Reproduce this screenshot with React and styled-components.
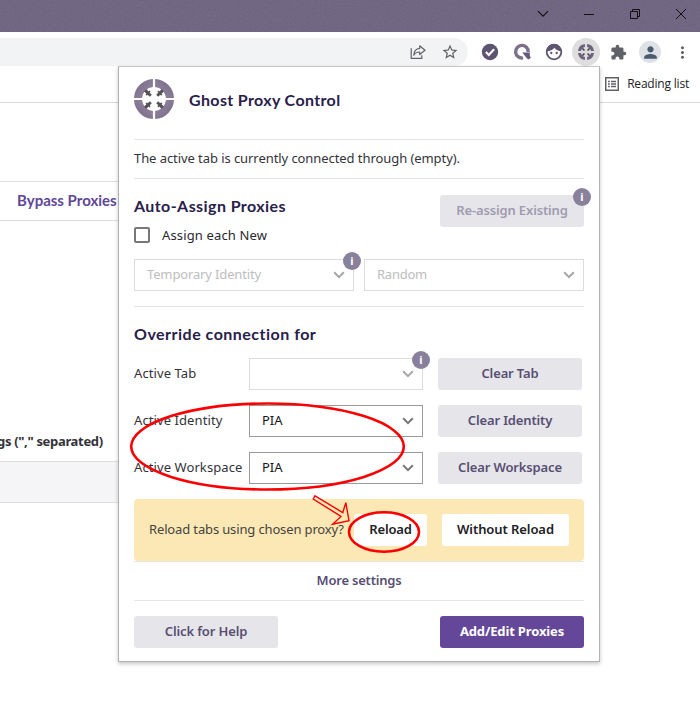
import React from 'react';
import styled, { createGlobalStyle, css } from 'styled-components';
import { MdStarBorder, MdExtension, MdPerson, MdMoreVert } from 'react-icons/md';

const GlobalStyle = createGlobalStyle`
  * { box-sizing: border-box; }
  body {
    margin: 0;
    background: #fff;
    overflow: hidden;
    font-family: 'Noto Sans', 'Open Sans', sans-serif;
    font-size: 13px;
    color: #333339;
  }
`;

const Window = styled.div`
  position: relative;
  width: 700px;
  height: 708px;
  overflow: hidden;
  background: #fff;
`;

/* ---------- browser chrome ---------- */
const TitleBar = styled.header`
  position: relative;
  height: 32px;
  background: #6c617f;
  display: flex;
  justify-content: flex-end;
  padding: 0 0 4px;
  margin-right: -4px;
`;
const Grain = styled.svg`
  position: absolute;
  inset: 0;
  width: 100%;
  height: 100%;
  opacity: 0.13;
`;
const WindowButton = styled.div`
  position: relative;
  width: 46px;
  display: flex;
  align-items: center;
  justify-content: center;
`;
const Toolbar = styled.div`
  height: 38px;
  padding-top: 6px;
  display: flex;
  align-items: flex-start;
`;
const Omnibox = styled.div`
  width: 468px;
  height: 28px;
  margin-right: 6px;
  padding-right: 2px;
  background: #f1f3f4;
  border-radius: 0 14px 14px 0;
  display: flex;
  justify-content: flex-end;
`;
const ToolIcon = styled.div`
  width: 32px;
  height: 28px;
  display: flex;
  align-items: center;
  justify-content: center;
  color: #5f6368;
`;
const Disc = styled.div`
  width: ${(p) => p.$size}px;
  height: ${(p) => p.$size}px;
  border-radius: 50%;
  background: ${(p) => p.$color};
  color: #4c5a70;
  display: flex;
  flex: none;
  align-items: center;
  justify-content: center;
`;
const BookmarksBar = styled.div`
  height: 33px;
  border-bottom: 1px solid #d9d9dc;
  display: flex;
  justify-content: flex-end;
  align-items: center;
  gap: 8px;
  padding: 0 11px 5px 0;
  color: #202124;
  font: 12px/16px 'Open Sans', 'Noto Sans', sans-serif;
  letter-spacing: -0.2px;
`;

/* ---------- page behind the popup ---------- */
const Page = styled.main`
  width: 400px;
  padding-top: 78px;
`;
const TabStrip = styled.div`
  height: 40px;
  border: solid #dedee1;
  border-width: 1px 0;
  padding-left: 17px;
  font: 700 15px/37px Lato, sans-serif;
  color: #5f4797;
`;
const FieldLabel = styled.div`
  margin: 210px 0 0 -3px;
  font-weight: 700;
  line-height: 20px;
  letter-spacing: -0.33px;
  white-space: nowrap;
`;
const FieldBox = styled.div`
  margin-top: 10px;
  height: 42px;
  background: #f5f5f7;
  border: solid #dedee1;
  border-width: 1px 0;
`;

/* ---------- popup ---------- */
const Popup = styled.section`
  position: absolute;
  left: 118px;
  top: 66px;
  width: 482px;
  height: 596px;
  padding: 0 15px;
  background: #fff;
  border: 1px solid #b2b2b4;
  border-top-color: #c6c6c8;
  box-shadow: 0 2px 4px rgba(0, 0, 0, 0.22);
`;
const PopupHeader = styled.div`
  height: 72px;
  padding-top: 12px;
  display: flex;
  gap: 15px;
`;
const Heading = styled.h2`
  margin: 0;
  font: 700 16px/24px Lato, sans-serif;
  letter-spacing: ${(p) => p.$spacing}px;
  color: #28204a;
`;
const TitleHeading = styled(Heading)`
  line-height: 42px;
`;
const divided = css`
  border-top: 1px solid #e5e5e7;
`;
const Status = styled.div`
  ${divided}
  height: 39px;
  line-height: 36px;
  letter-spacing: -0.07px;
`;
const AutoSection = styled.div`
  ${divided}
  height: 128px;
  padding-top: 15px;
`;
const SplitRow = styled.div`
  display: flex;
  justify-content: space-between;
  align-items: flex-start;
`;
const AssignAction = styled.div`
  padding-top: 1px;
`;
const CheckRow = styled.label`
  display: flex;
  align-items: center;
  gap: 12px;
  height: 20px;
  margin-top: 7px;
  letter-spacing: 0.14px;
  color: #29292f;
`;
const CheckBox = styled.span`
  width: 16px;
  height: 16px;
  border: 2px solid #77777a;
  border-radius: 2px;
`;
const SelectRow = styled.div`
  display: flex;
  gap: 10px;
  margin-top: 14px;
`;
const SelectBox = styled.div`
  position: relative;
  width: ${(p) => p.$width}px;
  height: 32px;
  padding: 0 8px 0 12px;
  border: 1px solid ${(p) => (p.$disabled ? '#dcdcde' : '#9a9a9d')};
  color: ${(p) => (p.$disabled ? '#bdbdc0' : '#17171c')};
  background: #fff;
  display: flex;
  align-items: center;
  justify-content: space-between;
  letter-spacing: ${(p) => p.$spacing || 0}px;
  svg { color: ${(p) => (p.$disabled ? '#a6a6a9' : '#77777a')}; }
`;
const SelectValue = styled.span`
  line-height: 28px;
  padding-bottom: 2px;
`;
const InfoBadge = styled.span`
  position: absolute;
  right: ${(p) => p.$right ?? -8}px;
  top: ${(p) => p.$top ?? -8}px;
  width: 18px;
  height: 18px;
  border-radius: 50%;
  background: #89819b;
  color: #fff;
  font: 700 11px/18px 'Noto Sans', sans-serif;
  letter-spacing: 0;
  text-align: center;
`;
const tones = {
  grey: css`background: #e6e5ea; color: #574f73;`,
  faded: css`background: #e6e5ea; color: #9f9bb0;`,
  white: css`background: #fff; color: #202026;`,
  primary: css`background: #644798; color: #fff; font-weight: 700;`,
};
const Button = styled.button`
  position: relative;
  display: block;
  width: ${(p) => p.$width || 144}px;
  height: 32px;
  flex: none;
  padding: 0 0 2px;
  border: 0;
  border-radius: 3px;
  font: 600 13px/30px 'Noto Sans', sans-serif;
  letter-spacing: ${(p) => p.$spacing ?? -0.14}px;
  text-align: center;
  white-space: nowrap;
  ${(p) => tones[p.$tone || 'grey']}
`;
const OverrideSection = styled.div`
  ${divided}
  height: 193px;
  padding-top: 15px;
`;
const OverrideRows = styled.div`
  display: grid;
  grid-template-columns: 115px 174px 144px;
  row-gap: 15px;
  margin-top: 12px;
`;
const RowLabel = styled.span`
  line-height: 30px;
  letter-spacing: 0.09px;
`;
const ButtonCell = styled.div`
  padding-left: 15px;
`;
const ReloadBanner = styled.div`
  height: 62px;
  padding: 15px;
  border-radius: 4px;
  background: #fce8b5;
  display: flex;
  letter-spacing: -0.14px;
  line-height: 30px;
  color: #45443f;
`;
const BannerText = styled.span`
  width: 205px;
  white-space: nowrap;
`;
const BannerButtons = styled.div`
  display: flex;
  gap: 15px;
`;
const MoreSettings = styled.div`
  ${divided}
  height: 39px;
  line-height: 37px;
  text-align: center;
  font-weight: 600;
  letter-spacing: -0.2px;
  color: #574f73;
`;
const Footer = styled.footer`
  ${divided}
  padding-top: 15px;
  display: flex;
  justify-content: space-between;
`;
const Annotations = styled.svg`
  position: absolute;
  left: 0;
  top: 0;
  pointer-events: none;
`;

function Chevron() {
  return (
    <svg width="12" height="8" viewBox="0 0 12 8" fill="none">
      <path d="M1.2 1.3 6 6.1l4.8-4.8" stroke="currentColor" strokeWidth="2" />
    </svg>
  );
}

function Select({ label, info, ...rest }) {
  return (
    <SelectBox {...rest}>
      <SelectValue>{label}</SelectValue>
      <Chevron />
      {info && <InfoBadge>i</InfoBadge>}
    </SelectBox>
  );
}

function GhostLogo() {
  return (
    <svg width="40" height="40" viewBox="0 0 40 40">
      <defs>
        <linearGradient id="ring" x1="0" y1="1" x2="1" y2="0">
          <stop offset="0" stopColor="#988ba3" />
          <stop offset="1" stopColor="#746684" />
        </linearGradient>
      </defs>
      {[0, 90, 180, 270].map((a) => (
        <g key={a} transform={`rotate(${a} 20 20)`}>
          <path d="M21.1 0A20 20 0 0 1 40 18.9H32A12.2 12.2 0 0 0 21.1 8Z" fill="url(#ring)" />
          <path d="M23.2 16.8 28.6 11.4" stroke="#565059" strokeWidth="2.8" />
          <path d="m24 12.2 3.8 3.8M27 10.9l2.2 2.2" stroke="#565059" strokeWidth="1.8" />
        </g>
      ))}
    </svg>
  );
}

const GhostMini = () => (
  <svg width="16" height="16" viewBox="0 0 16 16">
    {[0, 90, 180, 270].map((a) => (
      <g key={a} transform={`rotate(${a} 8 8)`}>
        <path d="M9.1 0A8 8 0 0 1 16 6.9H13A5 5 0 0 0 9.1 3Z" fill="#6c617f" />
        <path d="M9.5 6.5 11.7 4.3" stroke="#4f4a55" strokeWidth="1.7" />
      </g>
    ))}
  </svg>
);

const ShareIcon = () => (
  <svg width="16" height="16" viewBox="0 0 16 16" fill="none" stroke="#5f6368" strokeWidth="1.2">
    <path d="M1.2 4.3v10.1h10.6v-3.2" />
    <path d="M9.7 1.8 15 6.2l-5.3 4.3V8C6.8 8 5 9 3.8 11.2 4 7.3 6 4.8 9.7 4.4Z" strokeLinejoin="round" />
  </svg>
);
const CheckDisc = () => (
  <svg width="18" height="18" viewBox="0 0 18 18">
    <circle cx="9" cy="9" r="8.2" fill="#5e5472" />
    <path d="m4.9 8.9 2.9 3 5.3-5.6" fill="none" stroke="#fff" strokeWidth="2.2" />
  </svg>
);
const QIcon = () => (
  <svg width="18" height="18" viewBox="0 0 18 18" fill="none">
    <path d="M10 14.9A6.3 6.3 0 1 1 15.2 9" stroke="#7b6f8c" strokeWidth="3.4" />
    <path d="M9.3 9.6h7.5v2.9l1 2.6-2.6 1.4-2-2Z" fill="#655a79" />
  </svg>
);
const FaceIcon = () => (
  <svg width="18" height="18" viewBox="0 0 18 18">
    <circle cx="9" cy="9" r="7.3" fill="#fff" stroke="#5e5472" strokeWidth="1.8" />
    <path d="M1.5 8.2C2.2 3 5.3 1.2 9 1.2s6.8 1.8 7.5 7C13.4 8 11 6.8 9.4 4.7 7.8 6.8 5 8.2 1.5 8.2Z" fill="#5e5472" />
    <circle cx="6.3" cy="10" r="1.15" fill="#5e5472" />
    <circle cx="11.7" cy="10" r="1.15" fill="#5e5472" />
  </svg>
);
const ListIcon = () => (
  <svg width="14" height="14" viewBox="0 0 14 14" fill="none" stroke="#5f6368">
    <rect x=".75" y=".75" width="12.5" height="12.5" strokeWidth="1.5" />
    <path d="M3 4.5h1.8M3 7h1.8M3 9.5h1.8M6 4.5h5M6 7h5M6 9.5h5" strokeWidth="1.3" />
  </svg>
);

const ROWS = [
  { name: 'Active Tab', value: '', action: 'Clear Tab', disabled: true },
  { name: 'Active Identity', value: 'PIA', action: 'Clear Identity' },
  { name: 'Active Workspace', value: 'PIA', action: 'Clear Workspace' },
];

export default function App() {
  return (
    <Window>
      <GlobalStyle />
      <TitleBar>
        <Grain>
          <filter id="grain">
            <feTurbulence type="fractalNoise" baseFrequency="0.7" numOctaves="2" />
            <feColorMatrix type="saturate" values="0" />
          </filter>
          <rect width="100%" height="100%" filter="url(#grain)" />
        </Grain>
        <WindowButton>
          <svg width="12" height="8" viewBox="0 0 12 8" fill="none" stroke="#111">
            <path d="m1 1.2 5 5 5-5" strokeWidth="1.2" />
          </svg>
        </WindowButton>
        <WindowButton>
          <svg width="10" height="2"><path d="M0 1.5h10" stroke="#111" /></svg>
        </WindowButton>
        <WindowButton>
          <svg width="10" height="10" fill="none" stroke="#111">
            <path d="M.5 2.5h7v7h-7zM2.5 2.5v-2h7v7h-2" />
          </svg>
        </WindowButton>
        <WindowButton>
          <svg width="10" height="10" stroke="#111"><path d="m0 0 10 10M10 0 0 10" /></svg>
        </WindowButton>
      </TitleBar>
      <Toolbar>
        <Omnibox>
          <ToolIcon><ShareIcon /></ToolIcon>
          <ToolIcon><MdStarBorder size={18} /></ToolIcon>
        </Omnibox>
        <ToolIcon><CheckDisc /></ToolIcon>
        <ToolIcon><QIcon /></ToolIcon>
        <ToolIcon><FaceIcon /></ToolIcon>
        <ToolIcon><Disc $size={28} $color="#dededf"><GhostMini /></Disc></ToolIcon>
        <ToolIcon><MdExtension size={17} /></ToolIcon>
        <ToolIcon><Disc $size={22} $color="#dee1e6"><MdPerson size={19} /></Disc></ToolIcon>
        <ToolIcon><MdMoreVert size={19} /></ToolIcon>
      </Toolbar>
      <BookmarksBar>
        <ListIcon />
        Reading list
      </BookmarksBar>
      <Page>
        <TabStrip>Bypass Proxies</TabStrip>
        <FieldLabel>gs (&quot;,&quot; separated)</FieldLabel>
        <FieldBox />
      </Page>

      <Popup>
        <PopupHeader>
          <GhostLogo />
          <TitleHeading $spacing={0.36}>Ghost Proxy Control</TitleHeading>
        </PopupHeader>
        <Status>The active tab is currently connected through (empty).</Status>
        <AutoSection>
          <SplitRow>
            <div>
              <Heading $spacing={0.42}>Auto-Assign Proxies</Heading>
              <CheckRow><CheckBox />Assign each New</CheckRow>
            </div>
            <AssignAction>
              <Button $tone="faded">
                Re-assign Existing
                <InfoBadge $right={-7} $top={-7}>i</InfoBadge>
              </Button>
            </AssignAction>
          </SplitRow>
          <SelectRow>
            <Select $width={220} $disabled $spacing={-0.14} label="Temporary Identity" info />
            <Select $width={220} $disabled $spacing={-0.25} label="Random" />
          </SelectRow>
        </AutoSection>
        <OverrideSection>
          <Heading $spacing={0.49}>Override connection for</Heading>
          <OverrideRows>
            {ROWS.map((r) => (
              <React.Fragment key={r.name}>
                <RowLabel>{r.name}</RowLabel>
                <Select $width={174} $disabled={r.disabled} label={r.value} info={r.disabled} />
                <ButtonCell><Button>{r.action}</Button></ButtonCell>
              </React.Fragment>
            ))}
          </OverrideRows>
        </OverrideSection>
        <ReloadBanner>
          <BannerText>Reload tabs using chosen proxy?</BannerText>
          <BannerButtons>
            <Button $tone="white" $width={73}>Reload</Button>
            <Button $tone="white" $width={127} $spacing={-0.08}>Without Reload</Button>
          </BannerButtons>
        </ReloadBanner>
        <MoreSettings>More settings</MoreSettings>
        <Footer>
          <Button>Click for Help</Button>
          <Button $tone="primary">Add/Edit Proxies</Button>
        </Footer>
      </Popup>

      <Annotations width="700" height="708" fill="none" stroke="#fb0000">
        <ellipse cx="267.5" cy="446.5" rx="136.3" ry="43" strokeWidth="2.6" />
        <ellipse cx="384" cy="532" rx="35" ry="19.7" strokeWidth="2.6" />
        <path
          d="M315 495.8 342.8 512.6 345.8 502.6 349 520.6 332.6 524.3 341 516.4 313.2 499Z"
          strokeWidth="1.4"
        />
      </Annotations>
    </Window>
  );
}
